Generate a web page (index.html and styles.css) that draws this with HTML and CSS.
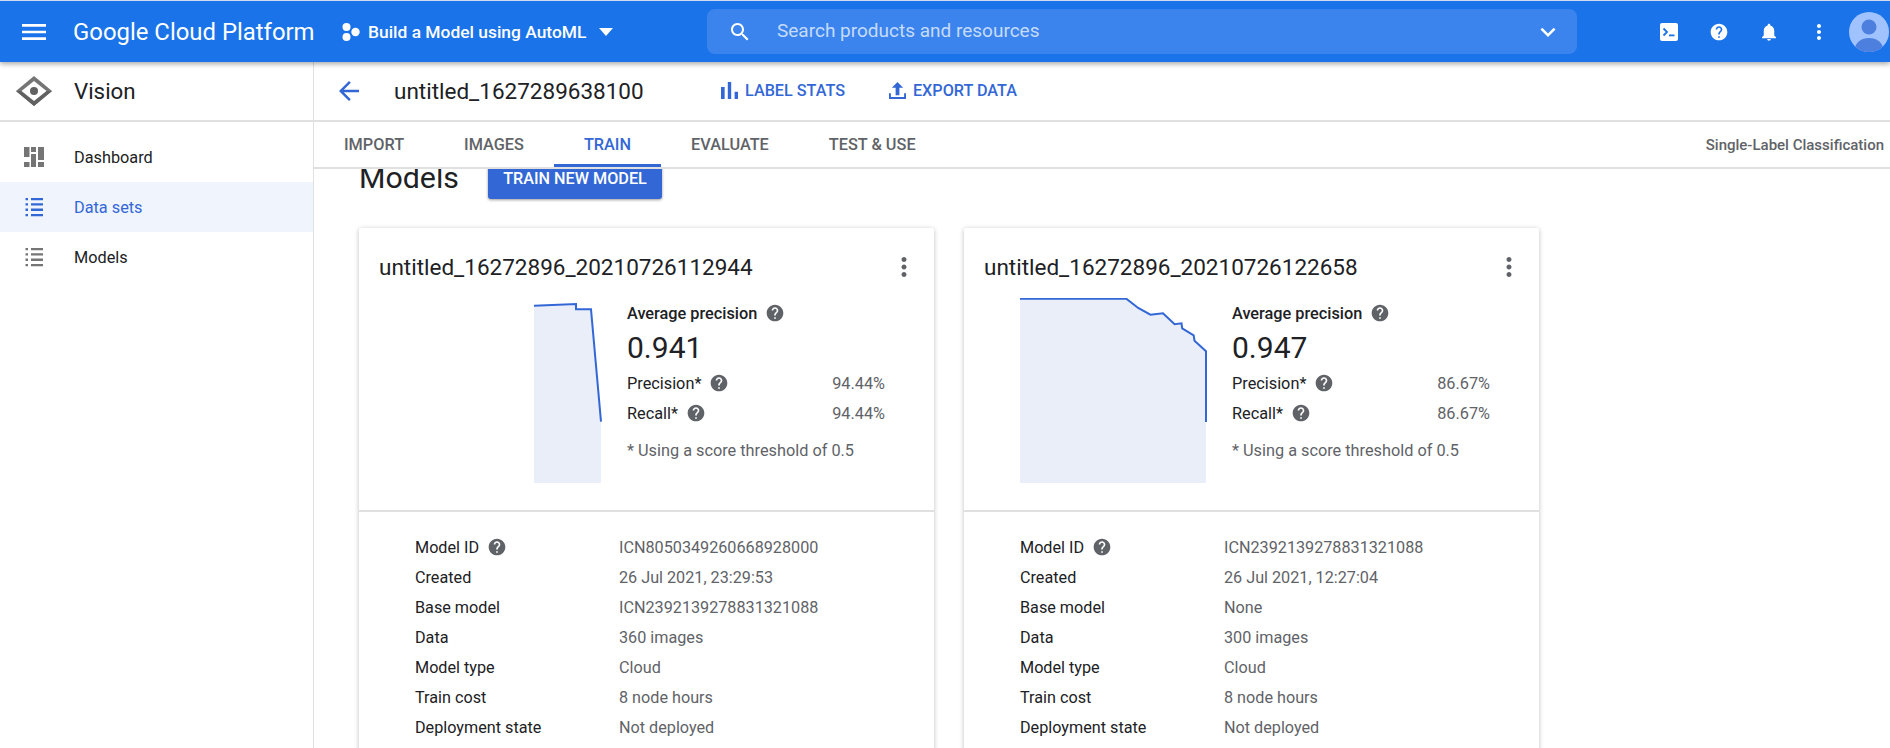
FILE: index.html
```html
<!DOCTYPE html>
<html lang="en">
<head>
    <meta charset="UTF-8">
    <meta name="viewport" content="width=device-width, initial-scale=1.0">
    <title>Vision - Models</title>
    <link rel="stylesheet" href="styles.css">
</head>
<body>
    <svg class="defs" width="0" height="0">
        <symbol id="i-help" viewBox="0 0 24 24"><path d="M12 2C6.48 2 2 6.48 2 12s4.48 10 10 10 10-4.48 10-10S17.52 2 12 2zm1 17h-2v-2h2v2zm2.07-7.75l-.9.92C13.45 12.9 13 13.5 13 15h-2v-.5c0-1.1.45-2.1 1.17-2.83l1.24-1.26c.37-.36.59-.86.59-1.41 0-1.1-.9-2-2-2s-2 .9-2 2H8c0-2.21 1.79-4 4-4s4 1.79 4 4c0 .88-.36 1.68-.93 2.25z"/></symbol>
        <symbol id="i-dots" viewBox="0 0 24 24"><path d="M12 8c1.1 0 2-.9 2-2s-.9-2-2-2-2 .9-2 2 .9 2 2 2zm0 2c-1.1 0-2 .9-2 2s.9 2 2 2 2-.9 2-2-.9-2-2-2zm0 6c-1.1 0-2 .9-2 2s.9 2 2 2 2-.9 2-2-.9-2-2-2z"/></symbol>
        <symbol id="i-list" viewBox="0 0 24 24"><path d="M3.5 3h2.5v2.3H3.500zM9 3h12v2.300H9zM3.500 8.300h2.500v2.300H3.500zM9 8.300h12v2.300H9zM3.500 13.600h2.500v2.300H3.500zM9 13.600h12v2.300H9zM3.500 18.900h2.500v2.300H3.500zM9 18.900h12v2.300H9z"/></symbol>
    </svg>

    <header class="topbar">
        <svg class="icon icon-menu" viewBox="0 0 24 24"><path d="M3 18h18v-2H3v2zm0-5h18v-2H3v2zm0-7v2h18V6H3z"/></svg>
        <div class="brand">Google Cloud Platform</div>
        <div class="project">
            <svg class="project-dots" viewBox="0 0 18 18"><circle cx="4.5" cy="4" r="4"/><circle cx="4.5" cy="14" r="4"/><circle cx="13.5" cy="9" r="4.2"/></svg>
            <span>Build a Model using AutoML</span>
            <svg class="icon-caret" viewBox="0 0 24 24"><path d="M5 8l7 8 7-8z"/></svg>
        </div>
        <div class="search">
            <svg class="search-icon" viewBox="0 0 24 24"><path d="M15.5 14h-.79l-.28-.27C15.41 12.59 16 11.11 16 9.5 16 5.91 13.09 3 9.5 3S3 5.91 3 9.5 5.91 16 9.5 16c1.61 0 3.09-.59 4.23-1.57l.27.28v.79l5 4.99L20.49 19l-4.99-5zm-6 0C7.01 14 5 11.99 5 9.5S7.01 5 9.5 5 14 7.01 14 9.5 11.99 14 9.5 14z"/></svg>
            <span class="search-text">Search products and resources</span>
            <svg class="search-chevron" viewBox="0 0 24 24"><path d="M7.41 8.59L12 13.17l4.59-4.58L18 10l-6 6-6-6z"/></svg>
        </div>
        <div class="top-actions">
            <svg class="top-icon" viewBox="0 0 18 18"><rect width="18" height="18" rx="2" fill="#fff"/><path d="M3.5 5.5l3.5 3.5-3.5 3.5" fill="none" stroke="#1a73e8" stroke-width="1.8"/><rect x="9" y="11.5" width="5.5" height="1.8" fill="#1a73e8"/></svg>
            <svg class="top-icon help-top" viewBox="0 0 24 24"><use href="#i-help"/></svg>
            <svg class="top-icon bell" viewBox="4 2 16 20"><path d="M12 22c1.1 0 2-.9 2-2h-4c0 1.1.9 2 2 2zm6-6v-5c0-3.07-1.63-5.64-4.5-6.32V4c0-.83-.67-1.5-1.5-1.5s-1.5.67-1.5 1.5v.68C7.64 5.36 6 7.92 6 11v5l-2 2v1h16v-1l-2-2z"/></svg>
            <svg class="top-icon kebab-top" viewBox="0 0 24 24"><use href="#i-dots"/></svg>
            <svg class="avatar" viewBox="0 0 40 40"><defs><clipPath id="avatar-clip"><circle cx="20" cy="20" r="20"/></clipPath></defs><circle cx="20" cy="20" r="20" fill="#a0c3ff"/><g clip-path="url(#avatar-clip)"><circle cx="20" cy="15" r="7.5" fill="#4d7fdf"/><ellipse cx="20" cy="37" rx="14" ry="11" fill="#4d7fdf"/></g></svg>
        </div>
    </header>

    <div class="layout">
        <aside class="sidebar">
            <div class="side-head">
                <svg class="vision-logo" viewBox="0 0 36 30"><path d="M18 0l18 15-18 15L0 15z" fill="#757575"/><path d="M18 15h18L18 30 0 15z" fill="#616161"/><path d="M18 5l12.500 10-12.500 10-12.500-10z" fill="#fff"/><circle cx="18" cy="15" r="4" fill="#616161"/></svg>
                <span class="side-name">Vision</span>
            </div>
            <nav class="side-nav">
                <a class="nav-item">
                    <svg class="nav-icon" viewBox="-2 -2 24 24"><path d="M0 0h5.500v10H0zM0 15h5.500v5H0zM7 0h5v5H7zM7 7h5v13H7zM14 0h6v13h-6zM14 15h6v5h-6z" fill="#757575"/></svg>
                    <span>Dashboard</span>
                </a>
                <a class="nav-item nav-active">
                    <svg class="nav-icon" viewBox="0 0 24 24"><use href="#i-list"/></svg>
                    <span>Data sets</span>
                </a>
                <a class="nav-item">
                    <svg class="nav-icon" viewBox="0 0 24 24"><use href="#i-list"/></svg>
                    <span>Models</span>
                </a>
            </nav>
        </aside>

        <main class="main">
            <div class="toolbar">
                <svg class="back" viewBox="4 4 16 16"><path d="M20 11H7.830l5.590-5.590L12 4l-8 8 8 8 1.410-1.410L7.830 13H20v-2z"/></svg>
                <h1 class="page-title">untitled_1627289638100</h1>
                <a class="tool-btn tool-first">
                    <svg viewBox="5 5 14 14"><path d="M5 9.200h3V19H5zM10.600 5h2.800v14h-2.800zm5.600 8H19v6h-2.800z"/></svg>
                    LABEL STATS
                </a>
                <a class="tool-btn">
                    <svg viewBox="3 2 18 18"><path d="M3 14v6h18v-6h-2v4H5v-4z"/><path d="M12 2l-6 6h4v8h4V8h4z"/></svg>
                    EXPORT DATA
                </a>
            </div>
            <div class="tabs">
                <a class="tab">IMPORT</a>
                <a class="tab">IMAGES</a>
                <a class="tab tab-active">TRAIN</a>
                <a class="tab">EVALUATE</a>
                <a class="tab">TEST &amp; USE</a>
                <span class="tabs-note">Single-Label Classification</span>
            </div>
            <div class="scroller">
                <div class="scroll-inner">
                    <div class="models-head">
                        <h2>Models</h2>
                        <button class="train-btn">TRAIN NEW MODEL</button>
                    </div>
                    <div class="cards">
                        <section class="card">
                            <div class="card-title">
                                <span>untitled_16272896_20210726112944</span>
                                <svg class="kebab" viewBox="0 0 24 24"><use href="#i-dots"/></svg>
                            </div>
                            <div class="summary">
                                <div class="chart">
                                    <svg width="68" height="186" viewBox="0 0 68 186">
                                        <path d="M0 7.700L42 6V11.300H57L67 123.700V185H0z" fill="#e9eef9"/>
                                        <path d="M0 7.700L42 6V11.300H57L67 123.700" fill="none" stroke="#3367d6" stroke-width="2"/>
                                    </svg>
                                </div>
                                <div class="stats">
                                    <div class="stat-head">Average precision <svg class="help"><use href="#i-help"/></svg></div>
                                    <div class="stat-big">0.941</div>
                                    <div class="stat-row"><span>Precision* <svg class="help"><use href="#i-help"/></svg></span><span class="muted">94.44%</span></div>
                                    <div class="stat-row"><span>Recall* <svg class="help"><use href="#i-help"/></svg></span><span class="muted">94.44%</span></div>
                                    <div class="stat-note">* Using a score threshold of 0.5</div>
                                </div>
                            </div>
                            <dl class="details">
                                <dt>Model ID <svg class="help"><use href="#i-help"/></svg></dt><dd>ICN8050349260668928000</dd>
                                <dt>Created</dt><dd>26 Jul 2021, 23:29:53</dd>
                                <dt>Base model</dt><dd>ICN2392139278831321088</dd>
                                <dt>Data</dt><dd>360 images</dd>
                                <dt>Model type</dt><dd>Cloud</dd>
                                <dt>Train cost</dt><dd>8 node hours</dd>
                                <dt>Deployment state</dt><dd>Not deployed</dd>
                            </dl>
                        </section>
                        <section class="card">
                            <div class="card-title">
                                <span>untitled_16272896_20210726122658</span>
                                <svg class="kebab" viewBox="0 0 24 24"><use href="#i-dots"/></svg>
                            </div>
                            <div class="summary">
                                <div class="chart">
                                    <svg width="187" height="186" viewBox="0 0 187 186">
                                        <path d="M0 .7H106.300L118.200 10 130.400 16.700 143 15.300 154.600 26.300 161.500 25.300 162.200 30.300 173.700 37.300 174.500 42.700 186 53.300V185H0z" fill="#e9eef9"/>
                                        <path d="M0 .7H106.300L118.200 10 130.400 16.700 143 15.300 154.600 26.300 161.500 25.300 162.200 30.300 173.700 37.300 174.500 42.700 186 53.300V124" fill="none" stroke="#3367d6" stroke-width="2"/>
                                    </svg>
                                </div>
                                <div class="stats">
                                    <div class="stat-head">Average precision <svg class="help"><use href="#i-help"/></svg></div>
                                    <div class="stat-big">0.947</div>
                                    <div class="stat-row"><span>Precision* <svg class="help"><use href="#i-help"/></svg></span><span class="muted">86.67%</span></div>
                                    <div class="stat-row"><span>Recall* <svg class="help"><use href="#i-help"/></svg></span><span class="muted">86.67%</span></div>
                                    <div class="stat-note">* Using a score threshold of 0.5</div>
                                </div>
                            </div>
                            <dl class="details">
                                <dt>Model ID <svg class="help"><use href="#i-help"/></svg></dt><dd>ICN2392139278831321088</dd>
                                <dt>Created</dt><dd>26 Jul 2021, 12:27:04</dd>
                                <dt>Base model</dt><dd>None</dd>
                                <dt>Data</dt><dd>300 images</dd>
                                <dt>Model type</dt><dd>Cloud</dd>
                                <dt>Train cost</dt><dd>8 node hours</dd>
                                <dt>Deployment state</dt><dd>Not deployed</dd>
                            </dl>
                        </section>
                    </div>
                </div>
            </div>
        </main>
    </div>
</body>
</html>
```

FILE: styles.css
```css
* {
    box-sizing: border-box;
}

html, body {
    height: 100%;
    margin: 0;
    overflow: hidden;
}

body {
    display: flex;
    flex-direction: column;
    font-family: Roboto, "Liberation Sans", sans-serif;
    font-size: 16.3px;
    color: #202124;
    background: #fff;
}

.defs {
    position: absolute;
}

/* top blue bar */
.topbar {
    flex: none;
    height: 62px;
    display: flex;
    align-items: center;
    background: #1a73e8;
    border-top: 1px solid #cfdcf2;
    color: #fff;
    fill: #fff;
    position: relative;
    z-index: 2;
    box-shadow: 0 2px 5px rgba(0, 0, 0, 0.35);
}

.icon-menu {
    width: 32px;
    height: 32px;
    margin-left: 18px;
}

.brand {
    margin-left: 23px;
    width: 269px;
    font-size: 23.9px;
    white-space: nowrap;
}

.project {
    display: flex;
    align-items: center;
    width: 365px;
    font-size: 17.4px;
    font-weight: 500;
}

.project-dots {
    width: 18px;
    height: 18px;
    margin-right: 8px;
}

.icon-caret {
    width: 24px;
    height: 24px;
    margin-left: 8px;
}

.search {
    width: 870px;
    height: 45px;
    display: flex;
    align-items: center;
    background: #3b84ed;
    border-radius: 8px;
}

.search-icon {
    width: 24px;
    height: 24px;
    margin-left: 21px;
}

.search-text {
    margin-left: 25px;
    padding-bottom: 2px;
    font-size: 19px;
    color: #c6dbfa;
}

.search-chevron {
    width: 30px;
    height: 30px;
    margin-left: auto;
    margin-right: 14px;
}

.top-actions {
    flex: 1;
    display: flex;
    align-items: center;
}

.top-icon {
    flex: none;
    width: 18px;
    height: 18px;
}

.top-icon:first-child {
    margin-left: 83px;
}

.help-top {
    width: 20px;
    height: 20px;
    margin-left: 31px;
}

.bell {
    width: 14px;
    height: 18px;
    margin-left: 33px;
}

.kebab-top {
    width: 24px;
    height: 24px;
    margin-left: 31px;
}

.avatar {
    flex: none;
    width: 40px;
    height: 40px;
    margin-left: 18px;
}

/* sidebar + main */
.layout {
    flex: 1;
    min-height: 0;
    display: flex;
}

.sidebar {
    flex: none;
    width: 314px;
    border-right: 1px solid #e0e0e0;
}

.side-head {
    height: 60px;
    display: flex;
    align-items: center;
    font-size: 22.3px;
    border-bottom: 2px solid #e0e0e0;
}

.side-name {
    padding-bottom: 1px;
}

.vision-logo {
    width: 36px;
    height: 30px;
    margin-left: 16px;
    margin-right: 22px;
}

.side-nav {
    padding-top: 10px;
}

.nav-item {
    height: 50px;
    display: flex;
    align-items: center;
    padding-left: 22px;
    fill: #757575;
}

.nav-icon {
    width: 24px;
    height: 24px;
    margin-right: 28px;
}

.nav-active {
    background: #f0f4fd;
    color: #3367d6;
    fill: #3367d6;
}

.main {
    flex: 1;
    min-width: 0;
    display: flex;
    flex-direction: column;
}

.toolbar {
    flex: none;
    height: 60px;
    display: flex;
    align-items: center;
    padding-bottom: 1px;
    border-bottom: 2px solid #e0e0e0;
}

.back {
    width: 20px;
    height: 20px;
    margin-left: 25px;
    fill: #3367d6;
}

.page-title {
    width: 327px;
    margin: 0 0 0 35px;
    font-size: 22.5px;
    font-weight: 400;
    white-space: nowrap;
}

.tool-btn {
    display: flex;
    align-items: center;
    font-size: 16.2px;
    font-weight: 500;
    color: #3367d6;
    fill: #3367d6;
    margin-left: 44px;
}

.tool-first {
    margin-left: 0;
}

.tool-btn svg {
    width: 17px;
    height: 17px;
    margin-right: 7px;
}

.tabs {
    flex: none;
    height: 47px;
    display: flex;
    align-items: stretch;
    border-bottom: 2px solid #e0e0e0;
}

.tab {
    display: flex;
    align-items: center;
    padding: 2px 30px 0;
    font-size: 16.3px;
    font-weight: 500;
    color: #5f6368;
    border-bottom: 3px solid transparent;
}

.tab-active {
    color: #3367d6;
    border-bottom-color: #3367d6;
}

.tabs-note {
    align-self: center;
    margin-left: auto;
    margin-right: 6px;
    font-size: 15px;
    font-weight: 500;
    color: #5f6368;
}

/* scrolled content, top part is hidden under the tabs */
.scroller {
    flex: 1;
    min-height: 0;
    overflow: hidden;
}

.scroll-inner {
    margin-top: -14px;
    padding-left: 45px;
}

.models-head {
    display: flex;
    align-items: center;
    height: 44px;
}

.models-head h2 {
    width: 129px;
    margin: 0;
    font-size: 30.3px;
    font-weight: 400;
}

.train-btn {
    width: 174px;
    height: 43px;
    padding: 2px 0 0;
    border: none;
    border-radius: 3px;
    background: #3367d6;
    color: #fff;
    font-family: inherit;
    font-size: 16.2px;
    font-weight: 500;
    box-shadow: 0 1px 3px rgba(0, 0, 0, 0.4);
}

.cards {
    display: flex;
    gap: 30px;
    margin-top: 29px;
}

.card {
    flex: none;
    width: 575px;
    background: #fff;
    border-radius: 2px;
    box-shadow: 0 1px 5px rgba(0, 0, 0, 0.25);
}

.card-title {
    height: 70px;
    padding: 11px 15px 4px 20px;
    display: flex;
    align-items: center;
    justify-content: space-between;
    font-size: 22.5px;
}

.kebab {
    width: 30px;
    height: 30px;
    fill: #5f6368;
}

.summary {
    display: flex;
    height: 214px;
    border-bottom: 2px solid #e0e0e0;
}

.chart {
    flex: none;
    width: 243px;
    display: flex;
    justify-content: flex-end;
    padding-bottom: 26px;
    align-items: flex-end;
}

.chart svg {
    display: block;
}

.stats {
    width: 258px;
    margin-left: 25px;
}

.stat-head {
    display: flex;
    align-items: center;
    height: 30px;
    font-weight: 500;
}

.stat-big {
    height: 40px;
    line-height: 40px;
    font-size: 30px;
}

.stat-row {
    display: flex;
    justify-content: space-between;
    align-items: center;
    height: 30px;
}

.stat-row span:first-child {
    display: flex;
    align-items: center;
}

.muted {
    color: #5f6368;
}

.stat-note {
    margin-top: 8px;
    height: 30px;
    line-height: 30px;
    color: #5f6368;
}

.help {
    width: 20px;
    height: 20px;
    margin-left: 8px;
    fill: #5f6368;
    flex: none;
}

.details {
    display: grid;
    grid-template-columns: 204px 1fr;
    grid-auto-rows: 30px;
    align-items: center;
    margin: 0;
    padding: 20px 0 19px 56px;
    font-size: 16.2px;
}

.details dt {
    display: flex;
    align-items: center;
}

.details dd {
    margin: 0;
    color: #5f6368;
}
```
